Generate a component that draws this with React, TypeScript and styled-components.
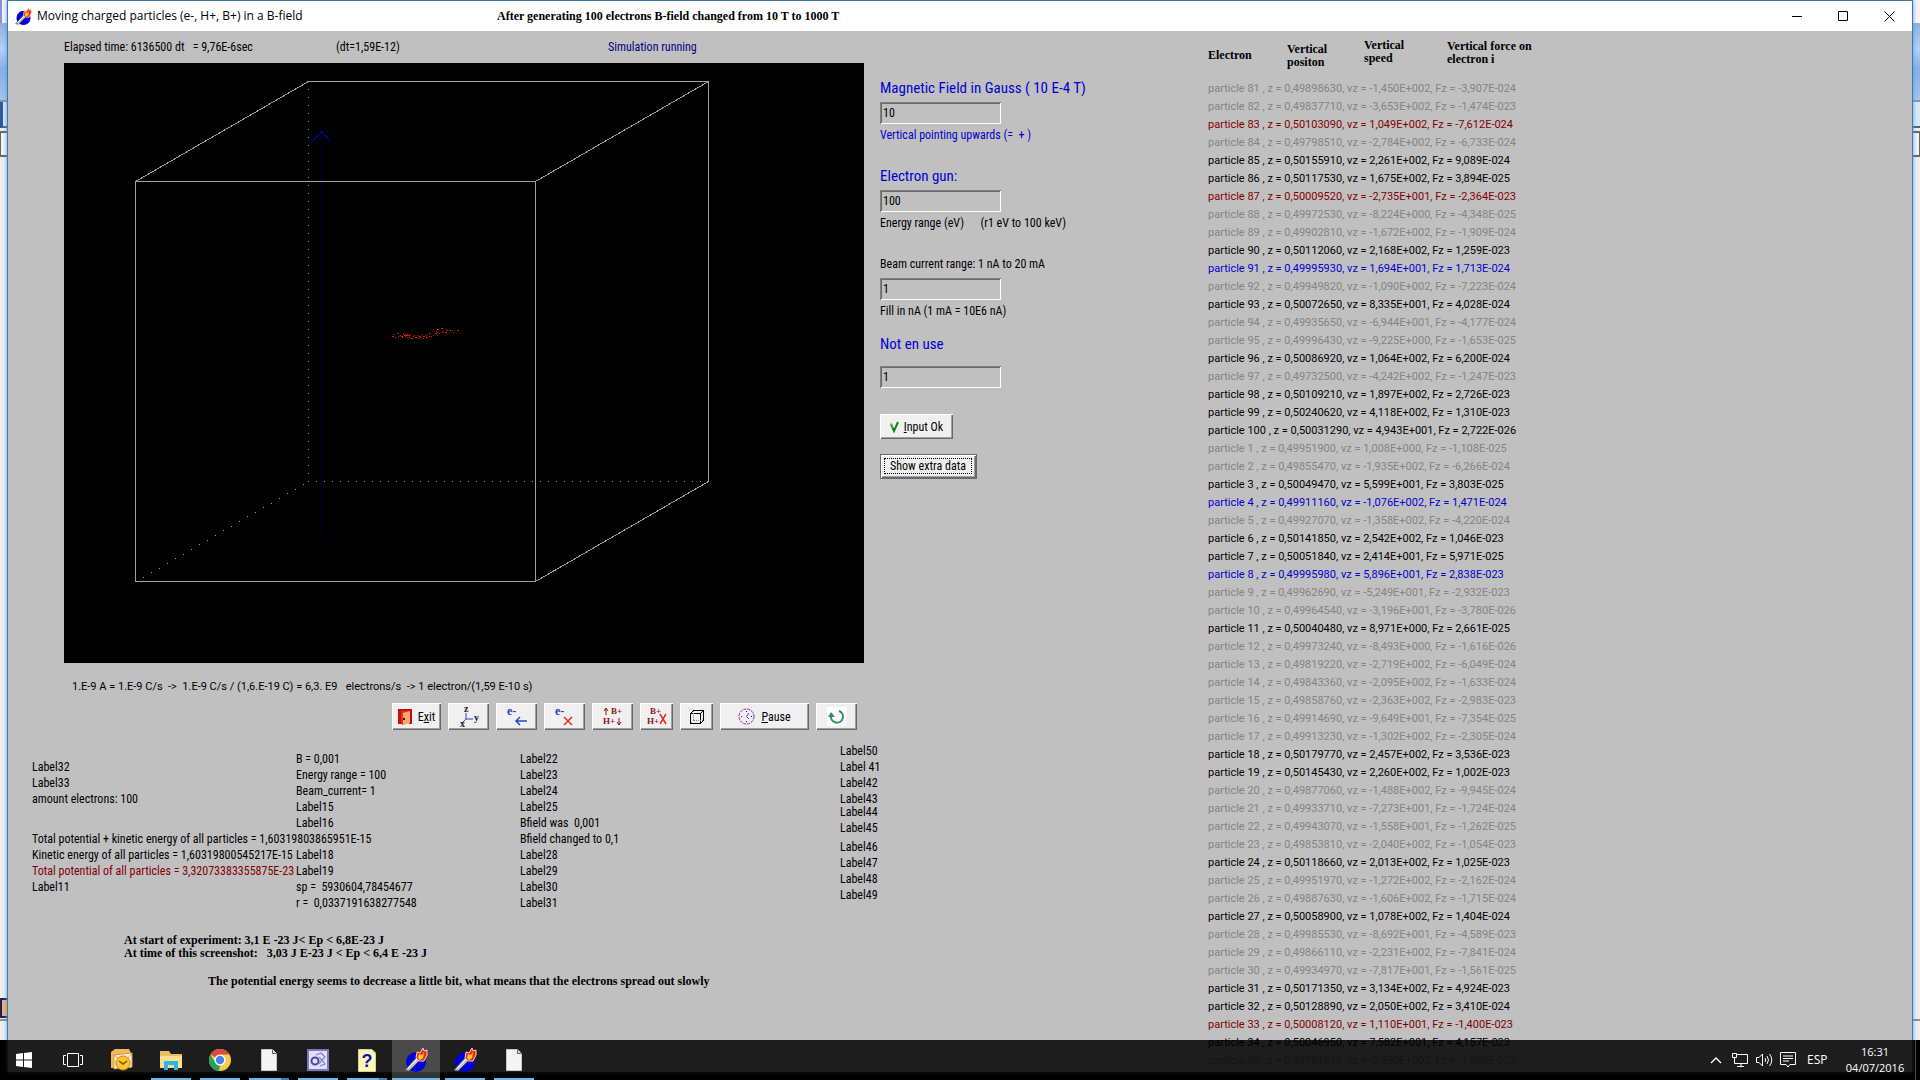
import React from 'react';
import styled, { createGlobalStyle, css } from 'styled-components';

const SANS = "'Roboto Condensed', Roboto, 'Liberation Sans', sans-serif";
const SANS_WIDE = "Roboto, 'Liberation Sans', sans-serif";
const SERIF = "'Liberation Serif', serif";
const SYSTEM = "'Open Sans', 'Noto Sans', sans-serif";

const GlobalStyle = createGlobalStyle`
  *, *::before, *::after { box-sizing: border-box; }
  body { margin: 0; background: #000; overflow: hidden; }
  button, input { font: inherit; color: inherit; margin: 0; }
`;

const Desktop = styled.div`
  position: relative;
  height: 100vh;
  min-height: 600px;
  overflow: hidden;
  background: #000;
  font: 12px/16px ${SANS};
  color: #000;
`;

/* ---------- windows ---------- */

const BackWindow = styled.div`
  position: absolute;
  inset: 0 0 40px;
  display: flex;
  flex-direction: column;
  background: #eceef0;
`;
const BackTitle = styled.div`
  height: 23px;
  background: #f4f4f6;
  border-left: 2px solid #8d8fd0;
`;
const BackRibbon = styled.div`
  height: 79px;
  background: linear-gradient(#8fb0e0, #b4d0f4 35%, #86aee6 60%, #a6c4ee);
  border-bottom: 2px solid #8c94a4;
`;
const BackTabs = styled.div`
  height: 26px;
  border-left: 3px solid #2a5a9c;
  border-bottom: 2px solid #56606c;
  background: #d8e8fa;
`;
const BackRuler = styled.div`
  height: 26px;
  border: 2px solid #606870;
  border-width: 2px 1px;
  margin-top: 3px;
  background: #f2f2f2;
`;
const BackPage = styled.div`
  flex: 1;
`;
const BackThumb = styled.div`
  width: 20px;
  height: 20px;
  border: 2px solid #1c1c60;
  background: #f2b068;
`;
const BackStatus = styled.div`
  height: 21px;
  margin-top: 1px;
  border-top: 2px solid #8a8a98;
`;

const Window = styled.main`
  position: absolute;
  inset: 0 7px 8px;
  display: flex;
  flex-direction: column;
  overflow: hidden;
  background: #c0c0c0;
  border: 1px solid #3c7ab4;
  border-bottom: 0;
  box-shadow: 0 0 4px #5a9cd8;
`;

const TitleBar = styled.header`
  display: flex;
  align-items: center;
  flex: none;
  height: 30px;
  padding-left: 7px;
  background: #fff;
`;
const WindowTitle = styled.h1`
  margin: 0 0 0 5px;
  width: 460px;
  font: 12px/16px ${SYSTEM};
`;
const Caption = styled.p`
  margin: 0;
  flex: 1;
  font: bold 12px/16px ${SERIF};
`;
const WindowButton = styled.button`
  display: grid;
  place-items: center;
  width: 46px;
  height: 30px;
  padding: 0;
  border: 0;
  background: none;
`;

const Body = styled.div`
  display: grid;
  grid-template-columns: 872px 328px 1fr;
  align-items: start;
`;

/* ---------- simulation column ---------- */

const Simulation = styled.section`
  white-space: pre;
`;
const StatusRow = styled.div`
  display: grid;
  grid-template-columns: 272px 272px auto;
  padding: 8px 0 8px 56px;
`;
const Running = styled.span`
  color: #000080;
`;
const Scene = styled.svg`
  display: block;
  margin-left: 56px;
  background: #000;
  shape-rendering: crispEdges;
`;
const Formula = styled.p`
  margin: 16px 0 8px 64px;
  font: 11px/16px ${SANS_WIDE};
`;

const bevel = css`
  border: 0;
  background: #f0f0f0;
  box-shadow: inset 1px 1px #fff, inset -1px -1px #696969, inset -2px -2px #a0a0a0;
`;

const Toolbar = styled.div`
  display: flex;
  gap: 7px;
  padding-left: 384px;
`;
const ToolButton = styled.button<{ $width?: number }>`
  ${bevel}
  display: flex;
  align-items: center;
  justify-content: center;
  gap: 6px;
  width: ${p => p.$width ?? 41}px;
  height: 27px;
  padding: 0;
`;

const LabelGrid = styled.div`
  display: grid;
  grid-template-columns: 264px 224px 320px auto;
  padding: 13px 0 0 24px;
`;
const LabelColumn = styled.div<{ $top?: number }>`
  width: 0;
  padding-top: ${p => p.$top ?? 0}px;
`;
const Label = styled.div<{ $tone?: string; $gap?: number }>`
  margin-top: ${p => p.$gap ?? 0}px;
  color: ${p => p.$tone ?? '#000'};
`;

const Remarks = styled.div`
  padding: 23px 0 0 116px;
  font: bold 12px/13px ${SERIF};
`;
const Conclusion = styled.p`
  margin: 15px 0 0 84px;
`;

/* ---------- form column ---------- */

const Form = styled.form`
  padding-top: 47px;
  white-space: pre;
`;
const Field = styled.div<{ $top?: number }>`
  margin-top: ${p => p.$top ?? 0}px;
`;
const FieldLabel = styled.label<{ $small?: boolean; $gap?: number }>`
  display: block;
  margin-bottom: ${p => p.$gap ?? 4}px;
  font-size: ${p => (p.$small ? 12 : 15)}px;
  line-height: 20px;
  color: ${p => (p.$small ? '#000' : '#0000d0')};
`;
const TextBox = styled.input`
  display: block;
  width: 121px;
  height: 22px;
  padding: 0 3px;
  border: 0;
  background: #c0c0c0;
  box-shadow: inset 1px 1px #808080, inset -1px -1px #fff, inset 2px 2px #696969;
`;
const Hint = styled.p<{ $blue?: boolean }>`
  margin: 3px 0 0;
  color: ${p => (p.$blue ? '#0000d0' : '#000')};
`;
const OkButton = styled.button`
  ${bevel}
  display: flex;
  align-items: center;
  justify-content: center;
  gap: 5px;
  width: 73px;
  height: 25px;
  margin: 26px 0 15px;
  padding: 0;
`;
const DataButton = styled.button`
  ${bevel}
  width: 97px;
  height: 25px;
  padding: 3px 4px 4px 3px;
  border: 1px solid #696969;
`;
const FocusRing = styled.span`
  display: block;
  border: 1px dotted #000;
  line-height: 14px;
`;

/* ---------- particle list ---------- */

const Particles = styled.table`
  border-collapse: collapse;
  table-layout: fixed;
  width: 340px;
  font: 11px/18px ${SANS_WIDE};
  white-space: pre;
`;
const Heading = styled.th<{ $top: number }>`
  height: 49px;
  padding: ${p => p.$top}px 0 0;
  vertical-align: top;
  text-align: left;
  font: bold 12px/13px ${SERIF};
`;
const Particle = styled.td<{ $tone: string }>`
  height: 18px;
  padding: 0;
  color: ${p => p.$tone};
`;

/* ---------- taskbar ---------- */

const Taskbar = styled.footer`
  position: absolute;
  inset: auto 0 0;
  display: flex;
  height: 40px;
  background: rgba(0, 0, 0, 0.85);
  color: #fff;
  font: 12px/16px ${SYSTEM};
`;
const TaskButton = styled.button<{ $open?: boolean; $active?: boolean; $stacked?: boolean }>`
  display: grid;
  place-items: center;
  width: 48px;
  height: 40px;
  padding: 0;
  border: 0;
  margin-right: 1px;
  background: ${p => (p.$active ? 'rgba(255, 255, 255, 0.2)' : 'none')};
  ${p => p.$open && css`
    background-image: linear-gradient(90deg, #76b4e4 ${p.$stacked ? 32 : 48}px, #4a7ca8 ${p.$stacked ? 32 : 48}px);
    background-size: ${p.$active ? 48 : 40}px 2px;
    background-position: 50% 100%;
    background-repeat: no-repeat;
  `}
`;
const Tray = styled.div`
  display: flex;
  align-items: center;
  margin-left: auto;
  gap: 8px;
`;
const TrayButton = styled.button`
  display: grid;
  place-items: center;
  width: 16px;
  height: 40px;
  padding: 0;
  border: 0;
  background: none;
`;
const Language = styled.span`
  margin: 0 10px 0 3px;
  width: 20px;
`;
const Clock = styled.time`
  width: 60px;
  font-size: 11px;
  text-align: center;
`;
const ShowDesktop = styled.button`
  width: 5px;
  height: 40px;
  padding: 0;
  border: 0;
  border-left: 1px solid #4c4c4c;
  margin-left: 2px;
  background: #000;
`;

/* ---------- icons ---------- */

const Torch = ({ size = 24 }: { size?: number }) => (
  <svg width={size} height={size} viewBox="0 0 24 24">
    <circle cx="12" cy="14" r="10" fill="#0000d8" />
    <path d="M1 22 L13 9 L16 12 L5 23 Z" fill="#c8c8cc" stroke="#55555c" strokeWidth="1" />
    <path d="M4 20 L13 11" stroke="#fff" strokeWidth="1" />
    <path d="M12 10 L13 4 L16 5 L19 0 L20 3 L23 2 L23 7 L20 13 L15 13 Z" fill="#f02818" stroke="#ffd0c0" strokeWidth="1" />
    <path d="M14 10 L15 6 L18 7 L20 4 L19 10 L16 12 Z" fill="#ffd428" />
  </svg>
);

const Door = () => (
  <svg width="14" height="16" viewBox="0 0 14 16">
    <path d="M0 0 H14 V15 H11 V3 H3 V15 H0 Z" fill="#c01010" />
    <path d="M3 2 H12 V14 H5 V16 L3 15 Z" fill="#e83020" />
    <path d="M5 4 L12 2 V14 L5 16 Z" fill="#ffa868" />
    <rect x="5" y="9" width="2" height="2" fill="#401000" />
  </svg>
);

const GLYPH = { fontFamily: 'Liberation Serif', fontWeight: 700, fontSize: 9 };

const Axes = () => (
  <svg width="22" height="27" viewBox="0 -3 22 27" {...GLYPH} fontSize={10} fill="#202030">
    <path d="M8 7 V13 H15 M8 13 L4 17" stroke="#3040c0" fill="none" />
    <text x="6" y="6">z</text>
    <text x="16" y="15">y</text>
    <text x="2" y="21">x</text>
  </svg>
);
const AddElectron = () => (
  <svg width="22" height="26" viewBox="0 -4 22 26" {...GLYPH} fontSize={12} fill="#2838b8">
    <text x="1" y="7">e-</text>
    <path d="M21 13 H11 M14 9 L10 13 L14 17" stroke="#2048c8" fill="none" strokeWidth="1.5" />
  </svg>
);
const RemoveElectron = () => (
  <svg width="22" height="26" viewBox="0 -4 22 26" {...GLYPH} fontSize={12} fill="#2838b8">
    <text x="1" y="7">e-</text>
    <path d="M10 9 L18 17 M18 9 L10 17" stroke="#e03018" fill="none" strokeWidth="1.5" />
  </svg>
);
const AddIon = () => (
  <svg width="22" height="23" viewBox="0 -2 22 23" {...GLYPH} fill="#8c1818">
    <path d="M4 8 V1 M2 4 L4 1 L6 4 M17 11 V18 M15 15 L17 18 L19 15" stroke="#8c1818" fill="none" />
    <text x="9" y="7">B+</text>
    <text x="1" y="17">H+</text>
  </svg>
);
const RemoveIon = () => (
  <svg width="20" height="23" viewBox="0 -2 20 23" {...GLYPH} fill="#8c1818">
    <text x="3" y="7">B+</text>
    <text x="0" y="17">H+</text>
    <path d="M13 7 L19 17 M19 7 L13 17" stroke="#e03018" fill="none" strokeWidth="1.5" />
  </svg>
);
const Cube = () => (
  <svg width="16" height="16" viewBox="0 0 16 16" fill="none" stroke="#000" shapeRendering="crispEdges">
    <path d="M1.5 4.5 H11.5 V14.5 H1.5 Z M1.5 4.5 L4.5 1.5 H14.5 V11.5 L11.5 14.5 M11.5 4.5 L14.5 1.5" />
    <path d="M4.5 2 V11.5 H14 M4.5 11.5 L2 14" stroke="#808080" strokeDasharray="1 1" />
  </svg>
);
const ClockFace = () => (
  <svg width="17" height="17" viewBox="0 0 17 17" fill="none">
    <circle cx="8.5" cy="8.5" r="7.5" stroke="#8c2c9c" fill="#f4ecfa" strokeDasharray="3 1" />
    <path d="M8.5 3 V4 M8.5 13 V14 M3 8.5 H4 M13 8.5 H14" stroke="#202040" />
    <path d="M11 5 L8.5 8.5 L11 11" stroke="#3060c0" />
  </svg>
);
const Refresh = () => (
  <svg width="19" height="19" viewBox="0 0 19 19" fill="none">
    <rect width="19" height="19" fill="#fff" />
    <path d="M12 4 A6 6 0 1 1 4 9" stroke="#2c9450" strokeWidth="2" />
    <path d="M1 10 L4 5 L8 10 Z" fill="#2c9450" />
  </svg>
);
const Check = () => (
  <svg width="9" height="12" viewBox="0 0 9 12" fill="none">
    <path d="M1 3 L4 10 L8 1" stroke="#108018" strokeWidth="2" />
    <path d="M1 2 L3 7" stroke="#a0b020" strokeWidth="1" />
  </svg>
);

const StartLogo = () => (
  <svg width="16" height="16" viewBox="0 0 16 16" fill="#fff">
    <path d="M0 2 L7 1 V7.5 H0 Z M8 1 L16 0 V7.5 H8 Z M0 8.5 H7 V15 L0 14 Z M8 8.5 H16 V16 L8 15 Z" />
  </svg>
);
const TaskViewIcon = () => (
  <svg width="20" height="14" viewBox="0 0 20 14" fill="none" stroke="#fff">
    <path d="M4.5 0.5 H15.5 V13.5 H4.5 Z M3 2.5 H0.5 V11.5 H3 M17 2.5 H19.5 V11.5 H17" />
  </svg>
);
const MailIcon = () => (
  <svg width="24" height="24" viewBox="0 0 24 24">
    <path d="M1 4 L5 1 H19 L21 5 V20 H1 Z" fill="#f4b85c" />
    <path d="M4 7 L22 5 V19 L4 21 Z" fill="#fdf0d8" stroke="#d89838" strokeWidth="1" />
    <path d="M4 7 L13 14 L22 6" fill="none" stroke="#e0a040" />
    <circle cx="13" cy="15" r="7" fill="#f8c830" stroke="#c88810" />
    <path d="M9 13 L13 16 L17 13" fill="none" stroke="#7a5200" strokeWidth="1.5" />
  </svg>
);
const FolderIcon = () => (
  <svg width="22" height="20" viewBox="0 0 22 20">
    <path d="M0 1 H9 L11 4 H22 V18 H0 Z" fill="#e8c060" />
    <path d="M0 6 H22 V18 H0 Z" fill="#fce08c" />
    <path d="M4 20 V11 H18 V20 H14 V15 H8 V20 Z" fill="#30b4e8" />
  </svg>
);
const ChromeIcon = () => (
  <svg width="22" height="22" viewBox="0 0 22 22">
    <circle cx="11" cy="11" r="11" fill="#f8cc48" />
    <path d="M11 11 L1.5 5.5 A11 11 0 0 1 20.5 5.5 H11 Z" fill="#dc4c3c" />
    <path d="M1.5 5.5 L6.5 14 L11 16 L10 22 A11 11 0 0 1 1.5 5.5 Z" fill="#28a060" />
    <circle cx="11" cy="11" r="5.5" fill="#fff" />
    <circle cx="11" cy="11" r="4.2" fill="#4484f0" />
  </svg>
);
const PageIcon = () => (
  <svg width="16" height="22" viewBox="0 0 16 22">
    <path d="M0.5 0.5 H11.5 L15.5 4.5 V21.5 H0.5 Z" fill="#f4f4f6" stroke="#c8c8c8" />
    <path d="M11.5 0.5 V4.5 H15.5" fill="#d8d8d8" stroke="#606060" />
  </svg>
);
const GearIcon = () => (
  <svg width="22" height="22" viewBox="0 0 22 22" fill="none">
    <rect x="1" y="1" width="20" height="20" fill="#e0e0f8" stroke="#7878c0" strokeWidth="2" />
    <circle cx="8" cy="12" r="3.5" stroke="#4848a0" strokeWidth="2" />
    <path d="M9 6 L14 4 L18 8 L15 11 L18 15 L13 17 M12 8 L15 11 L12 15" stroke="#8080c4" strokeWidth="1.2" />
  </svg>
);
const HelpIcon = () => (
  <svg width="18" height="23" viewBox="0 0 18 23">
    <path d="M0.5 0.5 H14 L17.5 4 V22.5 H0.5 Z" fill="#fcf8b8" stroke="#d8d098" />
    <text x="9" y="18" textAnchor="middle" fontFamily="Liberation Sans" fontWeight="700" fontSize="18" fill="#0c10b0">?</text>
  </svg>
);

/* ---------- data ---------- */

const GREY = '#848484';
const BLACK = '#000';
const RED = '#800000';
const BLUE = '#0000d0';

const particles: [number, string, string, string, string][] = [
  [81, '0,49898630', '-1,450E+002', '-3,907E-024', GREY],
  [82, '0,49837710', '-3,653E+002', '-1,474E-023', GREY],
  [83, '0,50103090', '1,049E+002', '-7,612E-024', RED],
  [84, '0,49798510', '-2,784E+002', '-6,733E-024', GREY],
  [85, '0,50155910', '2,261E+002', '9,089E-024', BLACK],
  [86, '0,50117530', '1,675E+002', '3,894E-025', BLACK],
  [87, '0,50009520', '-2,735E+001', '-2,364E-023', RED],
  [88, '0,49972530', '-8,224E+000', '-4,348E-025', GREY],
  [89, '0,49902810', '-1,672E+002', '-1,909E-024', GREY],
  [90, '0,50112060', '2,168E+002', '1,259E-023', BLACK],
  [91, '0,49995930', '1,694E+001', '1,713E-024', BLUE],
  [92, '0,49949820', '-1,090E+002', '-7,223E-024', GREY],
  [93, '0,50072650', '8,335E+001', '4,028E-024', BLACK],
  [94, '0,49935650', '-6,944E+001', '-4,177E-024', GREY],
  [95, '0,49996430', '-9,225E+000', '-1,653E-025', GREY],
  [96, '0,50086920', '1,064E+002', '6,200E-024', BLACK],
  [97, '0,49732500', '-4,242E+002', '-1,247E-023', GREY],
  [98, '0,50109210', '1,897E+002', '2,726E-023', BLACK],
  [99, '0,50240620', '4,118E+002', '1,310E-023', BLACK],
  [100, '0,50031290', '4,943E+001', '2,722E-026', BLACK],
  [1, '0,49951900', '1,008E+000', '-1,108E-025', GREY],
  [2, '0,49855470', '-1,935E+002', '-6,266E-024', GREY],
  [3, '0,50049470', '5,599E+001', '3,803E-025', BLACK],
  [4, '0,49911160', '-1,076E+002', '1,471E-024', BLUE],
  [5, '0,49927070', '-1,358E+002', '-4,220E-024', GREY],
  [6, '0,50141850', '2,542E+002', '1,046E-023', BLACK],
  [7, '0,50051840', '2,414E+001', '5,971E-025', BLACK],
  [8, '0,49995980', '5,896E+001', '2,838E-023', BLUE],
  [9, '0,49962690', '-5,249E+001', '-2,932E-023', GREY],
  [10, '0,49964540', '-3,196E+001', '-3,780E-026', GREY],
  [11, '0,50040480', '8,971E+000', '2,661E-025', BLACK],
  [12, '0,49973240', '-8,493E+000', '-1,616E-026', GREY],
  [13, '0,49819220', '-2,719E+002', '-6,049E-024', GREY],
  [14, '0,49843360', '-2,095E+002', '-1,633E-024', GREY],
  [15, '0,49858760', '-2,363E+002', '-2,983E-023', GREY],
  [16, '0,49914690', '-9,649E+001', '-7,354E-025', GREY],
  [17, '0,49913230', '-1,302E+002', '-2,305E-024', GREY],
  [18, '0,50179770', '2,457E+002', '3,536E-023', BLACK],
  [19, '0,50145430', '2,260E+002', '1,002E-023', BLACK],
  [20, '0,49877060', '-1,488E+002', '-9,945E-024', GREY],
  [21, '0,49933710', '-7,273E+001', '-1,724E-024', GREY],
  [22, '0,49943070', '-1,558E+001', '-1,262E-025', GREY],
  [23, '0,49853810', '-2,040E+002', '-1,054E-023', GREY],
  [24, '0,50118660', '2,013E+002', '1,025E-023', BLACK],
  [25, '0,49951970', '-1,272E+002', '-2,162E-024', GREY],
  [26, '0,49887630', '-1,606E+002', '-1,715E-024', GREY],
  [27, '0,50058900', '1,078E+002', '1,404E-024', BLACK],
  [28, '0,49985530', '-8,692E+001', '-4,589E-023', GREY],
  [29, '0,49866110', '-2,231E+002', '-7,841E-024', GREY],
  [30, '0,49934970', '-7,817E+001', '-1,561E-025', GREY],
  [31, '0,50171350', '3,134E+002', '4,924E-023', BLACK],
  [32, '0,50128890', '2,050E+002', '3,410E-024', BLACK],
  [33, '0,50008120', '1,110E+001', '-1,400E-023', RED],
  [34, '0,50046950', '7,582E+001', '4,157E-023', BLACK],
  [35, '0,49781810', '-2,850E+002', '-1,380E-023', GREY],
];

type LabelItem = { text: string; tone?: string; gap?: number };
const labelColumns: { top: number; items: LabelItem[] }[] = [
  {
    top: 16,
    items: [
      { text: 'Label32' },
      { text: 'Label33' },
      { text: 'amount electrons: 100' },
      { text: 'Total potential + kinetic energy of all particles = 1,60319803865951E-15', gap: 24 },
      { text: 'Kinetic energy of all particles = 1,60319800545217E-15' },
      { text: 'Total potential of all particles = 3,32073383355875E-23', tone: RED },
      { text: 'Label11' },
    ],
  },
  {
    top: 8,
    items: [
      { text: 'B = 0,001' },
      { text: 'Energy range = 100' },
      { text: 'Beam_current= 1' },
      { text: 'Label15' },
      { text: 'Label16' },
      { text: 'Label18', gap: 16 },
      { text: 'Label19' },
      { text: 'sp =  5930604,78454677' },
      { text: 'r =  0,0337191638277548' },
    ],
  },
  {
    top: 8,
    items: [
      { text: 'Label22' },
      { text: 'Label23' },
      { text: 'Label24' },
      { text: 'Label25' },
      { text: 'Bfield was  0,001' },
      { text: 'Bfield changed to 0,1' },
      { text: 'Label28' },
      { text: 'Label29' },
      { text: 'Label30' },
      { text: 'Label31' },
    ],
  },
  {
    top: 0,
    items: [
      { text: 'Label50' },
      { text: 'Label 41' },
      { text: 'Label42' },
      { text: 'Label43' },
      { text: 'Label44', gap: -3 },
      { text: 'Label45' },
      { text: 'Label46', gap: 3 },
      { text: 'Label47' },
      { text: 'Label48' },
      { text: 'Label49' },
    ],
  },
];

const electrons: [number, number][] = [
  [328, 273], [330, 271], [331, 274], [333, 270], [334, 273], [336, 272], [337, 273], [338, 274],
  [339, 270], [340, 272], [341, 271], [341, 273], [342, 272], [343, 271], [343, 274], [344, 272], [345, 274],
  [346, 271], [347, 275], [349, 273], [350, 272], [351, 274], [353, 272], [354, 275], [355, 273],
  [356, 274], [357, 271], [359, 273], [359, 275], [361, 272], [362, 274], [363, 271], [365, 273],
  [365, 270], [367, 273], [369, 272], [371, 270], [372, 268], [373, 269], [373, 266], [373, 272],
  [375, 270], [377, 265], [378, 269], [379, 268], [381, 269], [382, 266], [383, 267], [385, 267],
  [388, 267], [389, 269], [393, 267],
];

const hiddenEdge = Array.from({ length: 21 }, (_, i) => ({
  x: 79 + i * 8,
  y: Math.round(518 - ((7 + i * 8) * 100) / 172),
}));

const SceneView = () => (
  <Scene width="800" height="600" viewBox="0 0 800 600" role="img" aria-label="Particle chamber">
    <g fill="none" stroke="#a0a0a0">
      <path d="M71.5 118.5 H471.5 V518.5 H71.5 Z" />
      <path d="M71.5 118.5 L244.5 18.5 H644.5 V418.5 L471.5 518.5 M471.5 118.5 L644.5 18.5" />
      <path d="M244.5 18 V418" strokeDasharray="1 7" />
      <path d="M244 418.5 H644" strokeDasharray="1 7" />
    </g>
    <g fill="#a0a0a0">
      {hiddenEdge.map(dot => <rect key={dot.x} x={dot.x} y={dot.y} width="1" height="1" />)}
    </g>
    <g fill="none" stroke="#0000b8">
      <path d="M257.5 69 V473" strokeDasharray="1 3" />
      <path d="M247.5 79.5 L257.5 68.5 L267.5 79.5" />
    </g>
    <g fill="#e41414">
      {electrons.map(([x, y], i) => <rect key={i} x={x} y={y} width={i % 3 ? 1 : 2} height="1" />)}
    </g>
  </Scene>
);

const BackSlices = () => (
  <BackWindow aria-hidden="true">
    <BackTitle />
    <BackRibbon />
    <BackTabs />
    <BackRuler />
    <BackPage />
    <BackThumb />
    <BackStatus />
  </BackWindow>
);

export default function App() {
  return (
    <Desktop>
      <GlobalStyle />
      <BackSlices />
      <Window>
        <TitleBar>
          <Torch size={17} />
          <WindowTitle>Moving charged particles (e-, H+, B+) in a B-field</WindowTitle>
          <Caption>After generating 100 electrons B-field changed from 10 T to 1000 T</Caption>
          <WindowButton aria-label="Minimize">
            <svg width="10" height="10"><path d="M0 5.5 H10" stroke="#000" /></svg>
          </WindowButton>
          <WindowButton aria-label="Maximize">
            <svg width="10" height="10"><path d="M0.5 0.5 H9.5 V9.5 H0.5 Z" fill="none" stroke="#000" /></svg>
          </WindowButton>
          <WindowButton aria-label="Close">
            <svg width="11" height="11"><path d="M0.5 0.5 L10.5 10.5 M10.5 0.5 L0.5 10.5" stroke="#000" /></svg>
          </WindowButton>
        </TitleBar>

        <Body>
          <Simulation>
            <StatusRow>
              <span>{'Elapsed time: 6136500 dt   = 9,76E-6sec'}</span>
              <span>(dt=1,59E-12)</span>
              <Running>Simulation running</Running>
            </StatusRow>
            <SceneView />
            <Formula>{'1.E-9 A = 1.E-9 C/s  ->  1.E-9 C/s / (1,6.E-19 C) = 6,3. E9   electrons/s  -> 1 electron/(1,59 E-10 s)'}</Formula>
            <Toolbar>
              <ToolButton $width={49}><Door /><span>E<u>x</u>it</span></ToolButton>
              <ToolButton aria-label="Axes"><Axes /></ToolButton>
              <ToolButton aria-label="Add electron"><AddElectron /></ToolButton>
              <ToolButton aria-label="Remove electrons"><RemoveElectron /></ToolButton>
              <ToolButton aria-label="Add ions"><AddIon /></ToolButton>
              <ToolButton $width={33} aria-label="Remove ions"><RemoveIon /></ToolButton>
              <ToolButton $width={33} aria-label="Cube"><Cube /></ToolButton>
              <ToolButton $width={89}><ClockFace /><span><u>P</u>ause</span></ToolButton>
              <ToolButton aria-label="Restart"><Refresh /></ToolButton>
            </Toolbar>
            <LabelGrid>
              {labelColumns.map((column, i) => (
                <LabelColumn key={i} $top={column.top}>
                  {column.items.map(item => (
                    <Label key={item.text} $tone={item.tone} $gap={item.gap}>{item.text}</Label>
                  ))}
                </LabelColumn>
              ))}
            </LabelGrid>
            <Remarks>
              <div>{'At start of experiment: 3,1 E -23 J< Ep < 6,8E-23 J'}</div>
              <div>{'At time of this screenshot:   3,03 J E-23 J < Ep < 6,4 E -23 J'}</div>
              <Conclusion>The potential energy seems to decrease a little bit, what means that the electrons spread out slowly</Conclusion>
            </Remarks>
          </Simulation>

          <Form onSubmit={e => e.preventDefault()}>
            <Field>
              <FieldLabel htmlFor="field">Magnetic Field in Gauss ( 10 E-4 T)</FieldLabel>
              <TextBox id="field" defaultValue="10" />
              <Hint $blue>{'Vertical pointing upwards (=  + )'}</Hint>
            </Field>
            <Field $top={23}>
              <FieldLabel htmlFor="gun">Electron gun:</FieldLabel>
              <TextBox id="gun" defaultValue="100" />
              <Hint>{'Energy range (eV)      (r1 eV to 100 keV)'}</Hint>
            </Field>
            <Field $top={23}>
              <FieldLabel htmlFor="beam" $small>Beam current range: 1 nA to 20 mA</FieldLabel>
              <TextBox id="beam" defaultValue="1" />
              <Hint>Fill in nA (1 mA = 10E6 nA)</Hint>
            </Field>
            <Field $top={15}>
              <FieldLabel htmlFor="unused" $gap={12}>Not en use</FieldLabel>
              <TextBox id="unused" defaultValue="1" />
            </Field>
            <OkButton type="submit"><Check /><span><u>I</u>nput Ok</span></OkButton>
            <DataButton type="button"><FocusRing>Show extra data</FocusRing></DataButton>
          </Form>

          <Particles>
            <colgroup>
              <col width="79" />
              <col width="77" />
              <col width="83" />
              <col />
            </colgroup>
            <thead>
              <tr>
                <Heading $top={18}>Electron</Heading>
                <Heading $top={12}>Vertical<br />positon</Heading>
                <Heading $top={8}>Vertical<br />speed</Heading>
                <Heading $top={9}>Vertical force on<br />electron i</Heading>
              </tr>
            </thead>
            <tbody>
              {particles.map(([n, z, vz, fz, tone]) => (
                <tr key={n}>
                  <Particle colSpan={4} $tone={tone}>{`particle ${n} , z = ${z}, vz = ${vz}, Fz = ${fz}`}</Particle>
                </tr>
              ))}
            </tbody>
          </Particles>
        </Body>
      </Window>

      <Taskbar>
        <TaskButton aria-label="Start"><StartLogo /></TaskButton>
        <TaskButton aria-label="Task view"><TaskViewIcon /></TaskButton>
        <TaskButton aria-label="Mail"><MailIcon /></TaskButton>
        <TaskButton aria-label="Files" $open><FolderIcon /></TaskButton>
        <TaskButton aria-label="Browser" $open><ChromeIcon /></TaskButton>
        <TaskButton aria-label="Document" $open $stacked><PageIcon /></TaskButton>
        <TaskButton aria-label="Tools" $open><GearIcon /></TaskButton>
        <TaskButton aria-label="Help" $open $stacked><HelpIcon /></TaskButton>
        <TaskButton aria-label="Simulation" $open $active><Torch /></TaskButton>
        <TaskButton aria-label="Simulation 2" $open><Torch /></TaskButton>
        <TaskButton aria-label="Document 2" $open><PageIcon /></TaskButton>
        <Tray>
          <TrayButton aria-label="Show hidden icons">
            <svg width="12" height="8" fill="none" stroke="#fff"><path d="M1 7 L6 2 L11 7" strokeWidth="1.3" /></svg>
          </TrayButton>
          <TrayButton aria-label="Network">
            <svg width="16" height="14" fill="none" stroke="#fff">
              <path d="M5 1.5 H15.5 V10.5 H2.5 V5 M9 11 V13 M5 13.5 H12 M0.5 0.5 H4.5 V4.5 H0.5 Z" />
            </svg>
          </TrayButton>
          <TrayButton aria-label="Volume">
            <svg width="17" height="14" fill="none" stroke="#fff">
              <path d="M0.5 4.5 H3 L6.5 1 V13 L3 9.5 H0.5 Z M9 5 Q10.5 7 9 9 M11 3 Q14 7 11 11 M13.5 1 Q18 7 13.5 13" />
            </svg>
          </TrayButton>
          <TrayButton aria-label="Notifications">
            <svg width="16" height="16" fill="none" stroke="#fff">
              <path d="M0.5 0.5 H15.5 V12.5 H10 L8 15 L6 12.5 H0.5 Z M3 4 H13 M3 6.5 H13 M3 9 H9" />
            </svg>
          </TrayButton>
          <Language>ESP</Language>
          <Clock dateTime="2016-07-04T16:31">16:31<br />04/07/2016</Clock>
          <ShowDesktop aria-label="Show desktop" />
        </Tray>
      </Taskbar>
    </Desktop>
  );
}
